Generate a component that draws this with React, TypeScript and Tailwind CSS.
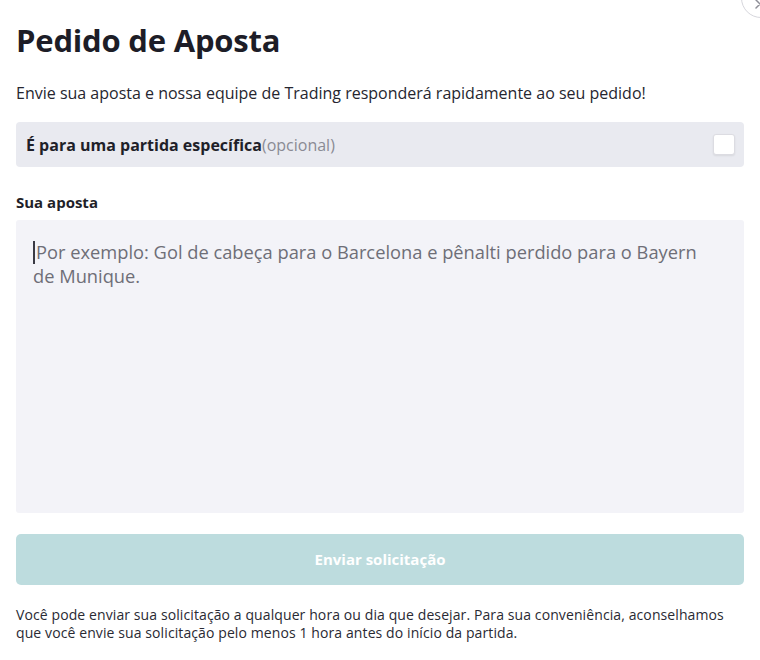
import React, { useState } from "react";

const font = { fontFamily: '"Open Sans", "Noto Sans", sans-serif' };

export default function App() {
  const [specific, setSpecific] = useState(false);
  const [bet, setBet] = useState("");

  return (
    <div className="relative min-h-[660px] w-[760px] overflow-hidden bg-white text-[#1f1f29]" style={font}>
      {/* close button, mostly off-screen */}
      <button className="absolute left-[741px] top-[-22px] h-10 w-10 rounded-full border border-[#d6d6dc] bg-white">
        <svg className="absolute left-[12px] top-[19px]" width="12" height="12" viewBox="0 0 12 12">
          <path d="M2 2l8 8M10 2l-8 8" stroke="#8e8e97" strokeWidth="1.5" strokeLinecap="round" />
        </svg>
      </button>

      <div className="flex flex-col px-4 pt-[20px]">
        <h1 className="text-[31px] font-bold leading-[40px] tracking-[-0.2px] text-[#1d1d27]">Pedido de Aposta</h1>

        <p className="mt-[23px] text-[16px] leading-[20px] text-[#26262f]">
          Envie sua aposta e nossa equipe de Trading responderá rapidamente ao seu pedido!
        </p>

        <label className="mt-[19px] flex h-[45px] cursor-pointer items-center justify-between rounded-[4px] bg-[#e9eaf0] pl-[10px] pr-[9px]">
          <span className="text-[16px] leading-[20px]">
            <span className="font-bold text-[#1f1f29]">É para uma partida específica</span>
            <span className="text-[#8a8a94]">(opcional)</span>
          </span>
          <input
            type="checkbox"
            checked={specific}
            onChange={(e) => setSpecific(e.target.checked)}
            className="h-[21px] w-[22px] appearance-none rounded-[3px] border border-[#dcdce2] bg-white shadow-[0_1px_2px_rgba(0,0,0,0.08)]"
          />
        </label>

        <div className="mt-[25px] text-[15px] font-bold leading-[20px] text-[#1f1f29]">Sua aposta</div>

        <div className="relative mt-[8px] h-[293px] rounded-[3px] bg-[#f3f3f8]">
          {bet === "" && (
            <div className="pointer-events-none absolute left-[17px] right-[38px] top-[16px] text-[18.3px] font-medium leading-[24px] text-[#6e6e77]">
              <span className="mr-[1px] inline-block h-[23px] w-[2px] translate-y-[5px] bg-[#3a3a44]" />
              Por exemplo: Gol de cabeça para o Barcelona e pênalti perdido para o Bayern de Munique.
            </div>
          )}
          <textarea
            value={bet}
            onChange={(e) => setBet(e.target.value)}
            className="h-full w-full resize-none bg-transparent px-[17px] pt-[16px] text-[18px] leading-[24px] outline-none"
            style={font}
          />
        </div>

        <button
          disabled={bet === ""}
          className="mt-[21px] h-[51px] rounded-[5px] bg-[#bddcde] text-[15px] font-bold text-white"
          style={font}
        >
          Enviar solicitação
        </button>

        <p className="mt-[21px] text-[14px] leading-[18px] tracking-[0.1px] text-[#2a2a33]">
          Você pode enviar sua solicitação a qualquer hora ou dia que desejar. Para sua conveniência, aconselhamos que você envie sua solicitação pelo menos 1 hora antes do início da partida.
        </p>
      </div>
    </div>
  );
}
